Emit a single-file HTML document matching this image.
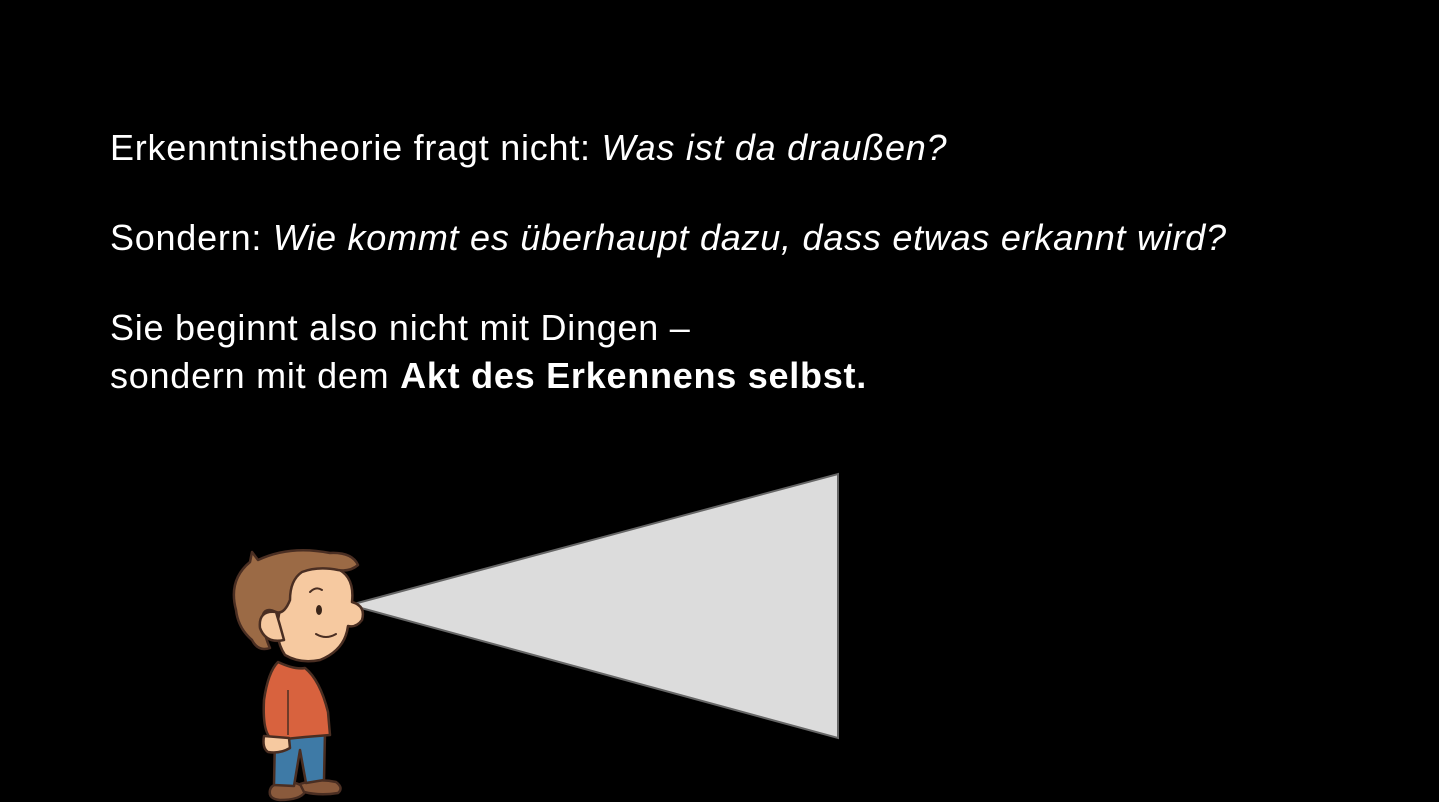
<!DOCTYPE html>
<html><head><meta charset="utf-8"><style>
html,body{margin:0;padding:0;background:#000;}
body{width:1439px;height:802px;position:relative;overflow:hidden;font-family:"Liberation Sans",sans-serif;color:#fff;}
.t{position:absolute;left:110px;font-size:36px;letter-spacing:0.75px;white-space:nowrap;line-height:48px;}
</style></head><body>
<div class="t" style="top:124px">Erkenntnistheorie fragt nicht: <i>Was ist da draußen?</i></div>
<div class="t" style="top:214px">Sondern: <i>Wie kommt es überhaupt dazu, dass etwas erkannt wird?</i></div>
<div class="t" style="top:304px">Sie beginnt also nicht mit Dingen –<br>sondern mit dem <b>Akt des Erkennens selbst.</b></div>
<svg width="1439" height="802" style="position:absolute;left:0;top:0">
<polygon points="350,605 838,474 838,738" fill="#dcdcdc" stroke="#666" stroke-width="2"/>
<g stroke="#4a2e22" stroke-width="2.5" stroke-linejoin="round">
<path d="M270,790 Q272,782 290,782 Q305,784 305,792 Q300,800 280,800 Q268,799 270,790Z" fill="#8a5a3c"/>
<path d="M300,784 Q318,778 336,782 Q344,788 338,793 Q320,796 304,792Z" fill="#8a5a3c"/>
<path d="M275,735 L325,732 L324,780 L306,783 L300,750 L294,786 L274,785Z" fill="#3e7aa6"/>
<path d="M278,662 Q295,670 305,668 Q320,680 328,712 L330,735 L305,737 L275,740 Q262,738 264,700 Q268,672 278,662Z" fill="#d8623e"/>
<path d="M288,690 L288,735" stroke-width="1.5" fill="none"/>
<path d="M264,736 Q262,748 268,752 Q280,754 290,748 L289,738Z" fill="#f6c9a0"/>
<path d="M285,580 Q300,565 335,568 Q355,575 352,602 Q366,606 362,620 Q356,628 348,626 Q345,650 320,660 Q300,664 285,655 Q275,640 278,620Z" fill="#f6c9a0"/>
<path d="M236,610 Q228,580 250,562 L252,552 L258,560 Q290,545 330,553 Q352,552 358,565 Q350,572 338,570 Q318,566 302,572 Q290,580 290,600 Q284,615 276,612 Q262,605 262,622 Q266,640 270,648 Q258,652 252,640 Q238,628 236,610Z" fill="#9b6a45"/>
<path d="M276,612 Q258,610 260,628 Q266,644 284,640 Q280,625 276,612Z" fill="#f6c9a0"/>
</g>
<g fill="none" stroke="#4a2e22" stroke-width="2" stroke-linecap="round">
<ellipse cx="319" cy="610" rx="3" ry="5" fill="#3a2418" stroke="none"/>
<path d="M310,592 Q316,586 322,590"/>
<path d="M316,634 Q326,640 336,634"/>
</g>
</svg>
</body></html>
